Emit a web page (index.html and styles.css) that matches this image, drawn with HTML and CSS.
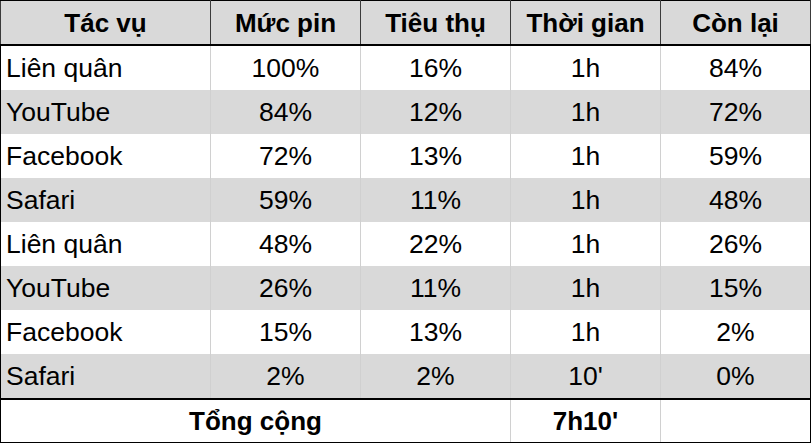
FILE: index.html
```html
<!DOCTYPE html>
<html lang="vi">
<head>
<meta charset="utf-8">
<link rel="stylesheet" href="styles.css">
</head>
<body>
<table class="grid">
  <colgroup>
    <col class="c-task">
    <col class="c-num">
    <col class="c-num">
    <col class="c-num">
    <col class="c-num">
  </colgroup>
  <thead>
    <tr class="head">
      <th>Tác vụ</th>
      <th>Mức pin</th>
      <th>Tiêu thụ</th>
      <th>Thời gian</th>
      <th>Còn lại</th>
    </tr>
  </thead>
  <tbody>
    <tr class="row"><td class="name">Liên quân</td><td>100%</td><td>16%</td><td>1h</td><td>84%</td></tr>
    <tr class="row alt"><td class="name">YouTube</td><td>84%</td><td>12%</td><td>1h</td><td>72%</td></tr>
    <tr class="row"><td class="name">Facebook</td><td>72%</td><td>13%</td><td>1h</td><td>59%</td></tr>
    <tr class="row alt"><td class="name">Safari</td><td>59%</td><td>11%</td><td>1h</td><td>48%</td></tr>
    <tr class="row"><td class="name">Liên quân</td><td>48%</td><td>22%</td><td>1h</td><td>26%</td></tr>
    <tr class="row alt"><td class="name">YouTube</td><td>26%</td><td>11%</td><td>1h</td><td>15%</td></tr>
    <tr class="row"><td class="name">Facebook</td><td>15%</td><td>13%</td><td>1h</td><td>2%</td></tr>
    <tr class="row alt"><td class="name">Safari</td><td>2%</td><td>2%</td><td>10'</td><td>0%</td></tr>
  </tbody>
  <tfoot>
    <tr class="total">
      <td colspan="3">Tổng cộng</td>
      <td>7h10'</td>
      <td></td>
    </tr>
  </tfoot>
</table>
</body>
</html>
```

FILE: styles.css
```css
html, body {
  margin: 0;
  padding: 0;
  background: #ffffff;
}

.grid {
  border-collapse: collapse;
  table-layout: fixed;
  width: 810px;
  font-family: "Liberation Sans", Arial, sans-serif;
  font-size: 26.5px;
  color: #000;
  border: 1px solid #000;
}

.c-task { width: 210px; }
.c-num { width: 150px; }

.head th {
  background: #d9d9d9;
  font-weight: bold;
  font-size: 26px;
  height: 43px;
  padding: 0;
  text-align: center;
  border-top: 1px solid #000;
  border-bottom: 2px solid #000;
  border-left: 1px solid #3a3a3a;
  border-right: 1px solid #3a3a3a;
  line-height: 1;
}

.row td {
  height: 44px;
  padding: 0;
  text-align: center;
  border-left: 1px solid #d0d0d0;
  border-right: 1px solid #d0d0d0;
  line-height: 1;
}

.row td.name {
  text-align: left;
  padding-left: 5px;
  border-left: 1px solid #000;
}

.row td:last-child {
  border-right: 1px solid #000;
}

.row.alt td {
  background: #d9d9d9;
}

.total td {
  height: 42px;
  padding: 0;
  text-align: center;
  font-weight: bold;
  font-size: 26px;
  border-top: 2px solid #000;
  border-bottom: 1px solid #000;
  border-left: 1px solid #d0d0d0;
  border-right: 1px solid #d0d0d0;
  line-height: 1;
}

.total td:first-child { border-left: 1px solid #000; }
.total td:last-child { border-right: 1px solid #000; }
```
